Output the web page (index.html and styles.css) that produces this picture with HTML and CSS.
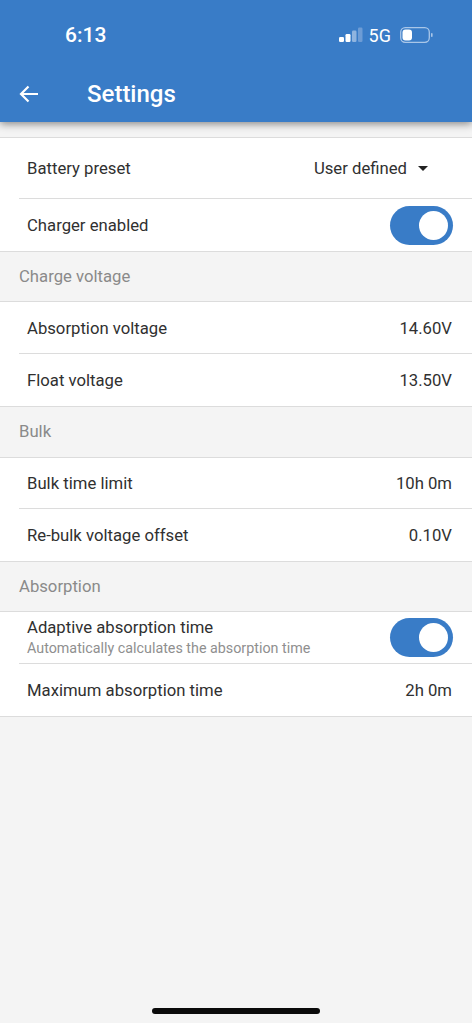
FILE: index.html
```html
<!DOCTYPE html>
<html lang="en">
<head>
<meta charset="utf-8">
<title>Settings</title>
<link rel="stylesheet" href="styles.css">
</head>
<body>
<header class="app-header">
  <div class="status-bar">
    <span class="clock">6:13</span>
    <div class="status-icons">
      <svg class="signal" width="24" height="16" viewBox="0 0 24 16"><rect x="0" y="10" width="5" height="5" rx="1.2" fill="#fff"/><rect x="6.5" y="7" width="5" height="8" rx="1.2" fill="#fff"/><rect x="13" y="3.500" width="4.500" height="11.500" rx="1.200" fill="#8fb4df"/><rect x="19" y="0.500" width="4.500" height="14.500" rx="1.200" fill="#6d9cd5"/></svg>
      <span class="network">5G</span>
      <svg class="battery" width="33" height="16" viewBox="0 0 33 16"><rect x="0.700" y="0.700" width="28.600" height="14.600" rx="4.500" fill="none" stroke="#a9c6e8" stroke-width="1.300"/><rect x="2.500" y="2.500" width="9.500" height="11" rx="3" fill="#fff"/><rect x="31" y="6" width="1.600" height="4" rx="0.800" fill="#a9c6e8"/></svg>
    </div>
  </div>
  <div class="title-bar">
    <svg class="back" width="24" height="24" viewBox="0 0 24 24"><path d="M21 12H4M11.500 4.500 4 12l7.500 7.500" fill="none" stroke="#fff" stroke-width="2.200"/></svg>
    <h1 class="title">Settings</h1>
  </div>
</header>
<main class="content">
  <section class="group">
    <div class="row row-tall"><span class="label">Battery preset</span><span class="value select">User defined<i class="caret"></i></span></div>
    <div class="row"><span class="label">Charger enabled</span><span class="switch"><i class="knob"></i></span></div>
  </section>
  <h2 class="section-title">Charge voltage</h2>
  <section class="group">
    <div class="row"><span class="label">Absorption voltage</span><span class="value">14.60V</span></div>
    <div class="row"><span class="label">Float voltage</span><span class="value">13.50V</span></div>
  </section>
  <h2 class="section-title section-title-wide">Bulk</h2>
  <section class="group">
    <div class="row row-short"><span class="label">Bulk time limit</span><span class="value">10h 0m</span></div>
    <div class="row"><span class="label">Re-bulk voltage offset</span><span class="value">0.10V</span></div>
  </section>
  <h2 class="section-title">Absorption</h2>
  <section class="group">
    <div class="row row-stacked"><div class="stack"><span class="label">Adaptive absorption time</span><span class="hint">Automatically calculates the absorption time</span></div><span class="switch"><i class="knob"></i></span></div>
    <div class="row"><span class="label">Maximum absorption time</span><span class="value">2h 0m</span></div>
  </section>
</main>
<div class="home-indicator"></div>
</body>
</html>
```
FILE: styles.css
```css
* { box-sizing: border-box; }
html, body { margin: 0; height: 1023px; overflow: hidden; }
body { background: #f4f4f4; font-family: Roboto, "Liberation Sans", sans-serif; color: #303030; position: relative; }
.app-header { height: 122px; background: #397cc7; color: #fff; box-shadow: 0 2px 8px rgba(0,0,0,.45); padding-top: 19px; position: relative; }
.status-bar { display: flex; justify-content: space-between; align-items: center; height: 32px; padding: 0 39px 0 65px; }
.clock { font-size: 21px; font-weight: 500; }
.status-icons { display: flex; align-items: center; }
.network { font-size: 18px; margin: 0 9px 0 6px; }
.title-bar { display: flex; align-items: center; height: 40px; margin-top: 23px; padding-left: 17px; }
.title { font-size: 24px; font-weight: 500; margin: 0 0 0 46px; }
.content { padding-top: 15px; }
.group { background: #fff; border-top: 1px solid #dcdcdc; border-bottom: 1px solid #dcdcdc; padding-left: 19px; }
.row { display: flex; justify-content: space-between; align-items: center; height: 53px; padding: 1px 19px 0 8px; border-top: 1px solid #dcdcdc; }
.row:first-child { border-top: 0; height: 51px; }
.row.row-tall { height: 60px; padding-top: 0; }
.row.row-short { height: 50px; padding-top: 0; }
.row.row-stacked { padding-top: 0; }
.label { font-size: 16.700px; }
.value { font-size: 16.700px; margin-right: 1px; }
.select { display: flex; align-items: center; margin-right: 0; padding-right: 25px; position: relative; }
.caret { width: 0; height: 0; margin-left: 11px; border-left: 5.500px solid transparent; border-right: 5.500px solid transparent; border-top: 5.500px solid #222; }
.section-title { margin: 0; height: 49px; padding: 0 0 1px 19px; display: flex; align-items: center; font-size: 16.700px; font-weight: 400; color: #8a8a8a; }
.section-title-wide { height: 50px; }
.stack { display: flex; flex-direction: column; gap: 3px; margin-top: -1px; }
.hint { font-size: 14.300px; color: #8f8f8f; }
.switch { width: 63px; height: 39px; border-radius: 20px; background: #397cc7; display: flex; align-items: center; justify-content: flex-end; padding-right: 5px; }
.knob { width: 29px; height: 29px; border-radius: 50%; background: #fff; }
.home-indicator { position: absolute; left: 152px; bottom: 9px; width: 168px; height: 6px; border-radius: 3px; background: #0a0a0a; }
```
